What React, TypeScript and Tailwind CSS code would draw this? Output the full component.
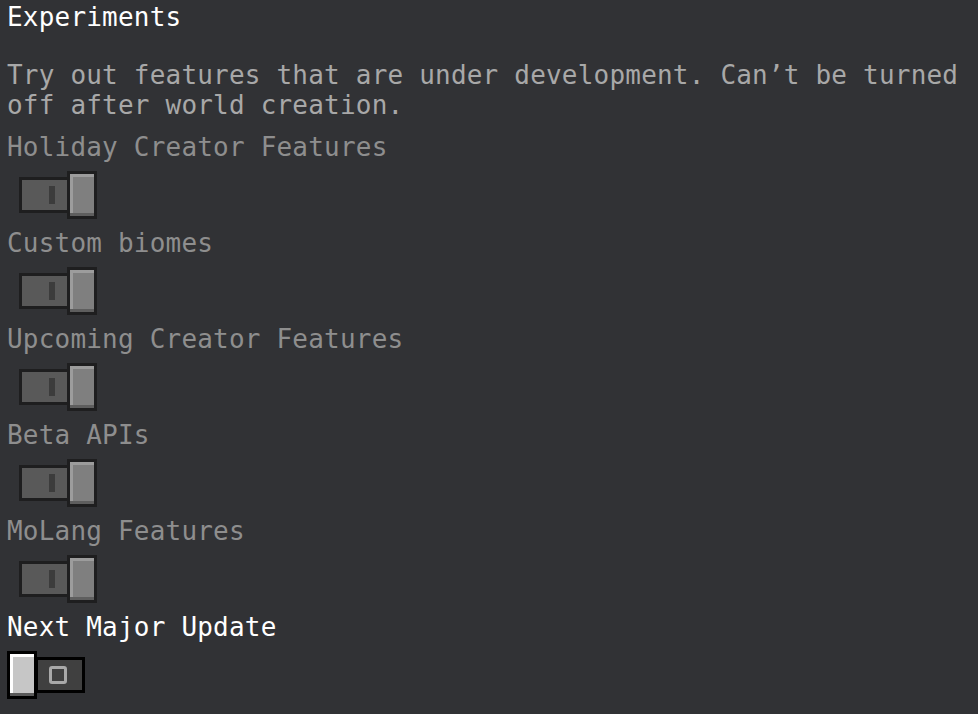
const experiments = [
  'Holiday Creator Features',
  'Custom biomes',
  'Upcoming Creator Features',
  'Beta APIs',
  'MoLang Features',
];

function LockedToggle() {
  return (
    <div className="flex h-12 items-center">
      <div className="ml-[12px] flex h-[36px] w-[51px] items-center border-[3px] border-[#1e1e1f] bg-[#595959] pl-[27px]">
        <div className="h-[18px] w-[6px] bg-[#3c3c3c]" />
      </div>
      <div className="-ml-[3px] h-12 w-[30px] border-[3px] border-[#1e1e1f] bg-[#7f7f7f] shadow-[inset_0_-3px_0_#5e5e5e,inset_3px_3px_0_#9c9c9c]" />
    </div>
  );
}

function OffToggle() {
  return (
    <div className="flex h-12 items-center">
      <div className="relative z-10 h-12 w-[30px] border-[3px] border-black bg-[#c6c6c6] shadow-[inset_0_-3px_0_#595959,inset_3px_3px_0_#ffffff]" />
      <div className="-ml-[2px] flex h-[36px] w-[50px] items-center border-[3px] border-black bg-[#404040] pl-[11px]">
        <div className="h-[18px] w-[18px] rounded-[3px] border-[3px] border-[#a9a9a9]" />
      </div>
    </div>
  );
}

export default function App() {
  return (
    <div className="min-h-screen w-full bg-[#313235] pl-[7px] font-['DejaVu_Sans_Mono','Liberation_Mono',monospace] text-[26px] tracking-[0.2px]">
      <h1 className="leading-[34px] text-white">Experiments</h1>

      <p className="mt-[26px] leading-[30px] text-[#a8a8a8]">
        Try out features that are under development. Can’t be turned
        <br />
        off after world creation.
      </p>

      <div className="mt-[3px] flex flex-col">
        {experiments.map((name) => (
          <div key={name}>
            <p className="leading-[48px] text-[#8e8e8e]">{name}</p>
            <LockedToggle />
          </div>
        ))}
        <div>
          <p className="leading-[48px] text-white">Next Major Update</p>
          <OffToggle />
        </div>
      </div>
    </div>
  );
}
